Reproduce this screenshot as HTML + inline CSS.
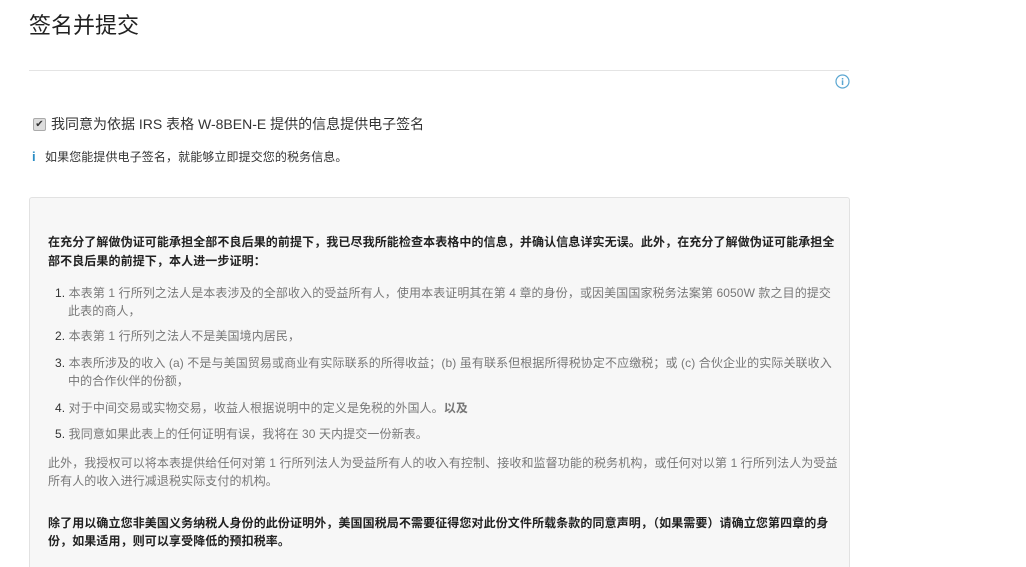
<!DOCTYPE html>
<html style="overflow:hidden;height:567px"><head><meta charset="utf-8"><style>
body{margin:0;background:#fff;font-family:"Liberation Sans","Noto Sans CJK SC",sans-serif;color:#333;width:1026px;height:567px;overflow:hidden;position:relative}
.a{position:absolute;white-space:nowrap}
.t{font-size:12px;line-height:18px;letter-spacing:0.1px}
.g{color:#777}
.b{font-weight:bold;color:#222}
.n{color:#333}
</style></head><body>
<div class="a" style="left:29px;top:8px;font-size:22px;color:#222">签名并提交</div>
<div class="a" style="left:29px;top:70px;width:820px;height:1px;background:#e4e4e4"></div>
<svg class="a" style="left:835px;top:74px" width="15" height="15" viewBox="0 0 15 15"><circle cx="7.5" cy="7.5" r="6.5" fill="none" stroke="#5aa6d1" stroke-width="1.2"/><rect x="6.8" y="4" width="1.5" height="1.5" fill="#5aa6d1"/><rect x="6.8" y="6.3" width="1.5" height="4.7" fill="#5aa6d1"/></svg>
<div class="a" style="left:33px;top:118px;width:11px;height:11px;border:1px solid #aaa;border-radius:2px;background:#ddd;font-size:10px;line-height:11px;text-align:center;color:#333">✔</div>
<div class="a" style="left:51px;top:115px;font-size:14px;line-height:18px;color:#333">我同意为依据 IRS 表格 W-8BEN-E 提供的信息提供电子签名</div>
<div class="a" style="left:32px;top:149px;font-size:13px;font-weight:bold;color:#2a8cc4">i</div>
<div class="a t" style="left:45px;top:148px;color:#333">如果您能提供电子签名，就能够立即提交您的税务信息。</div>
<div class="a" style="left:29px;top:197px;width:819px;height:370px;background:#f7f7f7;border:1px solid #e2e2e2;border-bottom:none;border-radius:3px 3px 0 0"></div>
<div class="a t b" style="left:48px;top:233px">在充分了解做伪证可能承担全部不良后果的前提下，我已尽我所能检查本表格中的信息，并确认信息详实无误。此外，在充分了解做伪证可能承担全</div>
<div class="a t b" style="left:48px;top:252px">部不良后果的前提下，本人进一步证明：</div>
<div class="a t g" style="left:55px;top:284px"><span class="n">1.</span> 本表第 1 行所列之法人是本表涉及的全部收入的受益所有人，使用本表证明其在第 4 章的身份，或因美国国家税务法案第 6050W 款之目的提交</div>
<div class="a t g" style="left:68px;top:302px">此表的商人，</div>
<div class="a t g" style="left:55px;top:327px"><span class="n">2.</span> 本表第 1 行所列之法人不是美国境内居民，</div>
<div class="a t g" style="left:55px;top:354px"><span class="n">3.</span> 本表所涉及的收入 (a) 不是与美国贸易或商业有实际联系的所得收益；(b) 虽有联系但根据所得税协定不应缴税；或 (c) 合伙企业的实际关联收入</div>
<div class="a t g" style="left:68px;top:372px">中的合作伙伴的份额，</div>
<div class="a t g" style="left:55px;top:399px"><span class="n">4.</span> 对于中间交易或实物交易，收益人根据说明中的定义是免税的外国人。<b>以及</b></div>
<div class="a t g" style="left:55px;top:425px"><span class="n">5.</span> 我同意如果此表上的任何证明有误，我将在 30 天内提交一份新表。</div>
<div class="a t g" style="left:48px;top:454px">此外，我授权可以将本表提供给任何对第 1 行所列法人为受益所有人的收入有控制、接收和监督功能的税务机构，或任何对以第 1 行所列法人为受益</div>
<div class="a t g" style="left:48px;top:472px">所有人的收入进行减退税实际支付的机构。</div>
<div class="a t b" style="left:48px;top:514px">除了用以确立您非美国义务纳税人身份的此份证明外，美国国税局不需要征得您对此份文件所载条款的同意声明，（如果需要）请确立您第四章的身</div>
<div class="a t b" style="left:48px;top:532px">份，如果适用，则可以享受降低的预扣税率。</div>
</body></html>
